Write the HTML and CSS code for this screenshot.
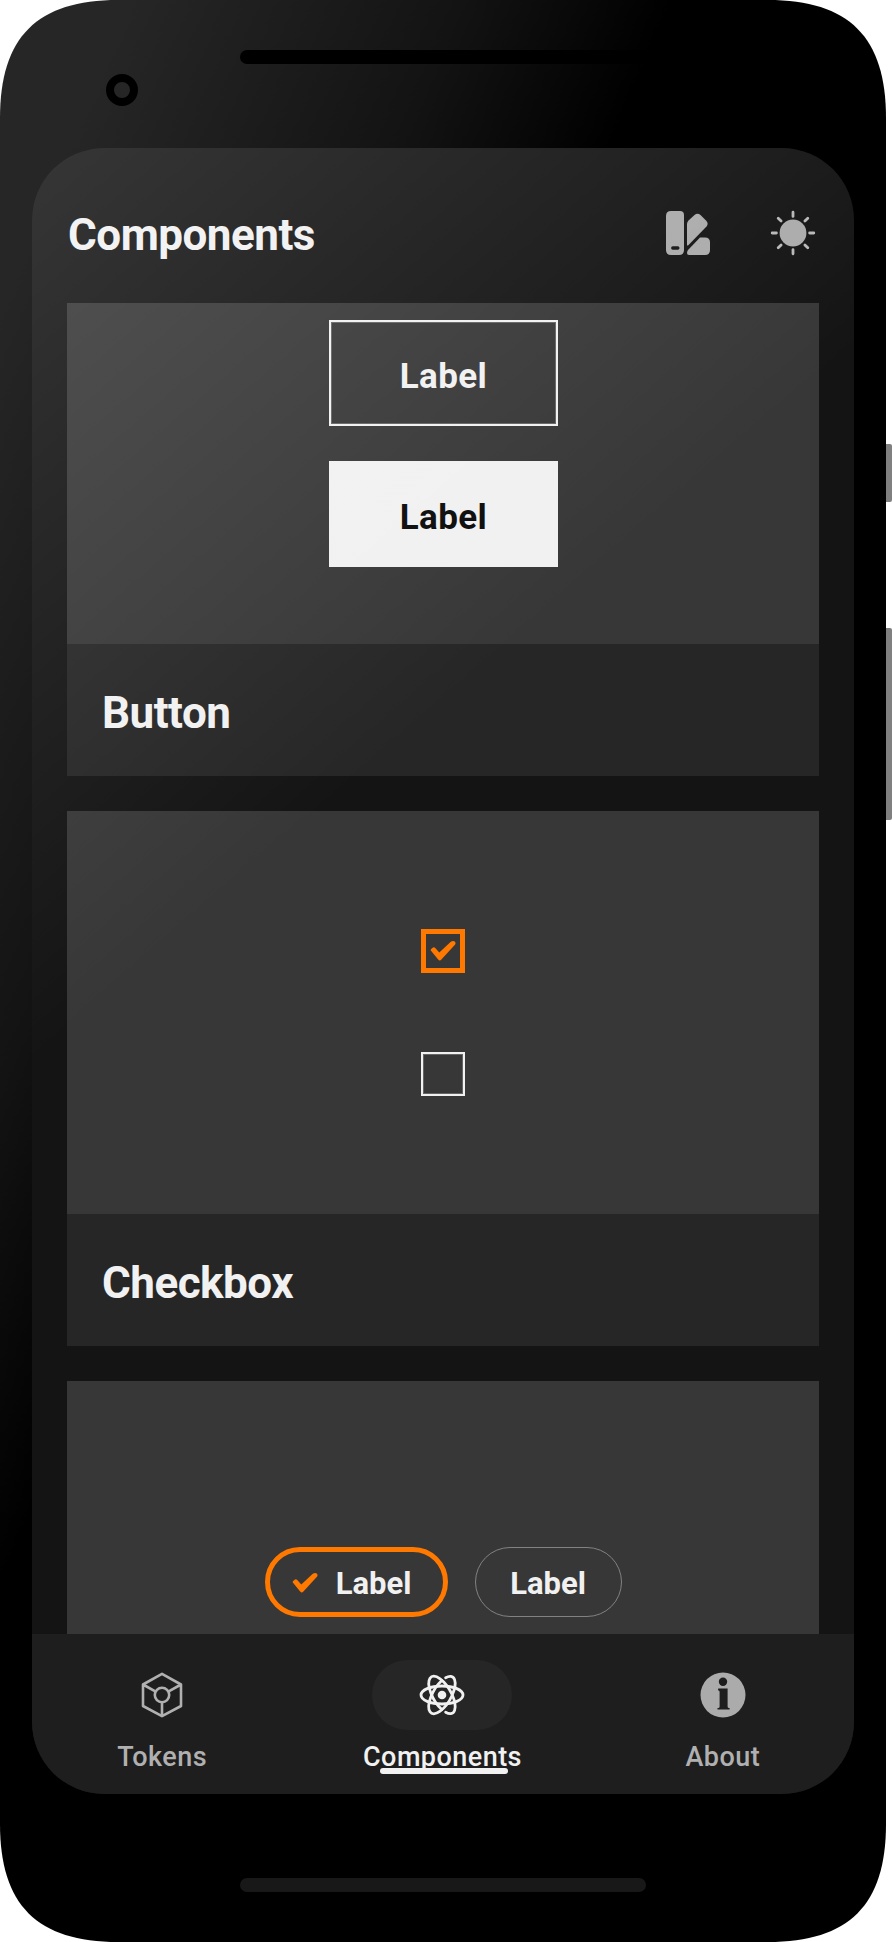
FILE: index.html
```html
<!DOCTYPE html>
<html lang="en">
<head>
<meta charset="utf-8">
<title>Components</title>
<link rel="stylesheet" href="styles.css">
</head>
<body>
<div class="stage">
  <div class="phone">
    <div class="bezel-top"><div class="camera"></div><div class="speaker"></div></div>
    <div class="screen">
      <header class="header">
        <h1 class="title">Components</h1>
        <div class="actions">
          <svg class="icon" viewBox="0 0 46 46" fill="#ababab">
            <path fill-rule="evenodd" d="M6 1h9q4 0 4 4v35q0 5-5 5H6q-5 0-5-5V6q0-5 5-5zM7.800 36.300a1.700 1.700 0 0 0 0 3.400h5a1.700 1.700 0 0 0 0-3.400z"/>
            <path d="M22 35V14q0-2 1.500-3.500l6-5.500q3-2.500 6 0l5.500 5.500q3 3 .500 6L22.800 35.700z"/>
            <path d="M23 40l12-12.500h5q5 0 5 5V40q0 5-5 5H24q-2 0-2-2 0-1.500 1-3z"/>
          </svg>
          <svg class="icon" viewBox="0 0 46 46" fill="#ababab" stroke="#b8b8b8" stroke-width="2.800" stroke-linecap="round">
            <circle cx="23" cy="23" r="13.400" stroke="none"/>
            <path d="M23 2.200v4.200M23 39.600v4.200M2.200 23h4.200M39.600 23h4.200M8.200 8.200l2.900 2.900M34.900 34.900l2.900 2.900M8.200 37.800l2.900-2.900M34.900 11.100l2.900-2.900"/>
          </svg>
        </div>
      </header>
      <main class="list">
        <section class="card card-clipped">
          <div class="demo demo-buttons">
            <div class="button outlined">Label</div>
            <div class="button filled">Label</div>
          </div>
          <h2 class="name">Button</h2>
        </section>
        <section class="card">
          <div class="demo demo-checkboxes">
            <div class="checkbox checked">
              <svg class="check" viewBox="0 0 26 22"><path d="M1 10.800Q.300 9.700 1.200 9L3 7.500q1-.700 2 .200L9.300 12.500 20.500 2q2.800-2 4.500-.200 1.200 1.500-.300 3.200L11.400 19.500q-1.600 1.900-3.200 0z" fill="#ff7900"/></svg>
            </div>
            <div class="checkbox"></div>
          </div>
          <h2 class="name">Checkbox</h2>
        </section>
        <section class="card">
          <div class="demo demo-chips">
            <div class="chip selected">
              <svg class="check" viewBox="0 0 26 22"><path d="M1 10.800Q.300 9.700 1.200 9L3 7.500q1-.700 2 .200L9.300 12.500 20.500 2q2.800-2 4.500-.200 1.200 1.500-.300 3.200L11.400 19.500q-1.600 1.900-3.200 0z" fill="#ff7900"/></svg>
              <span>Label</span>
            </div>
            <div class="chip"><span>Label</span></div>
          </div>
        </section>
      </main>
      <nav class="nav">
        <div class="tab">
          <div class="pill">
            <svg class="icon" viewBox="0 0 46 46" fill="none" stroke="#b0b0b0" stroke-width="2.600" stroke-linejoin="round">
              <path d="M23 1.800l19 10.700v21.500L23 44.200 4 34V12.500zM4 12.500l12.700 7.200M42 12.500l-12.700 7.200M23 30v14"/>
              <circle cx="23" cy="23" r="7.200"/>
            </svg>
          </div>
          <span>Tokens</span>
        </div>
        <div class="tab active">
          <div class="pill">
            <svg class="icon" viewBox="0 0 46 46" fill="none" stroke="#f1f1f1" stroke-width="2.800" stroke-linecap="round">
              <ellipse cx="23" cy="23" rx="21" ry="9"/>
              <path transform="rotate(60 23 23)" d="M35.500 30.390A21 9.200 0 1 1 39.800 28.500"/>
              <path transform="rotate(-60 23 23)" d="M35.500 15.610A21 9.200 0 1 0 39.800 17.500"/>
              <circle cx="23" cy="23" r="4.300" fill="#f1f1f1" stroke="none"/>
            </svg>
          </div>
          <span>Components</span>
        </div>
        <div class="tab">
          <div class="pill">
            <svg class="icon" viewBox="0 0 46 46">
              <circle cx="23" cy="23" r="22.500" fill="#ababab"/>
              <g fill="#1e1e1e"><circle cx="23" cy="9.800" r="4.200"/><path d="M18.200 16.500H27.600V34.500q0 1.500 1.500 1.500h.500v1.600H17.500V36h.700q1.400 0 1.400-1.500V19.800q0-1.500-1.600-1.500z"/></g>
            </svg>
          </div>
          <span>About</span>
        </div>
        <div class="gesture"></div>
      </nav>
      <div class="glare"></div>
    </div>
    <div class="bezel-bottom"><div class="speaker-bottom"></div></div>
  </div>
  <div class="side"><div class="power"></div><div class="volume"></div></div>
</div>
</body>
</html>
```
FILE: styles.css
```css
* { box-sizing: border-box; }
body { margin: 0; background: #fff; font-family: Roboto, "Liberation Sans", sans-serif; color: #f1f1f1; }
.stage { display: flex; width: 892px; height: 1942px; overflow: hidden; }
.phone {
  display: flex; flex-direction: column; width: 886px; height: 1942px;
  background: linear-gradient(113deg, #262626 120px, #131313 425px, #000 620px);
  clip-path: path("M0 118C0 37 37 0 118 0H768C849 0 886 37 886 118V1824C886 1905 849 1942 768 1942H118C37 1942 0 1905 0 1824Z");
}
.bezel-top { display: flex; height: 148px; padding-left: 106px; }
.camera { width: 32px; height: 32px; margin-top: 74px; border: 8px solid #000; border-radius: 50%; background: #262626; }
.speaker { width: 406px; height: 14px; margin: 50px 0 0 102px; border-radius: 7px; background: #000; }
.screen {
  position: relative; display: flex; flex-direction: column; width: 822px; height: 1646px;
  margin-left: 32px; border-radius: 72px; background: #141414; overflow: hidden;
}
.glare {
  position: absolute; inset: 0; pointer-events: none;
  background: linear-gradient(139deg, rgba(255,255,255,.145), rgba(255,255,255,0) 695px);
}
.header { display: flex; flex: none; justify-content: space-between; height: 155px; padding: 62px 38px 0 36px; }
.title { margin: 0; padding-top: 1px; font-size: 44px; line-height: 48px; font-weight: 700; letter-spacing: -.5px; }
.actions { display: flex; gap: 59px; }
.icon { display: block; width: 46px; height: 46px; }
.list { display: flex; flex: 1; flex-direction: column; gap: 35px; min-height: 0; padding: 0 35px; overflow: hidden; }
.card { flex: none; background: #262626; }
.card-clipped { margin-top: -62px; }
.demo { display: flex; height: 403px; align-items: center; justify-content: center; background: #373737; }
.demo-buttons { flex-direction: column; gap: 35px; padding-top: 2px; }
.button { display: flex; width: 229px; height: 106px; padding: 7px 0 0 1px; align-items: center; justify-content: center; font-size: 35px; font-weight: 700; letter-spacing: .4px; }
.outlined { border: 2px solid #f1f1f1; outline: 1px solid rgba(241,241,241,.25); outline-offset: -3px; }
.filled { background: #f1f1f1; color: #0a0a0a; }
.demo-checkboxes { flex-direction: column; gap: 79px; }
.checkbox { display: flex; width: 44px; height: 44px; align-items: center; justify-content: center; border: 2px solid #f1f1f1; outline: 1px solid rgba(241,241,241,.25); outline-offset: -3px; }
.checked { border: 5px solid #ff7900; outline: none; }
.check { display: block; width: 26px; height: 22px; }
.demo-chips { gap: 27px; padding: 0 0 1px; }
.chip { display: flex; width: 147px; height: 70px; padding-top: 2px; align-items: center; justify-content: center; border: 1px solid #828282; border-radius: 35px; font-size: 31px; font-weight: 700; }
.selected { width: 183px; gap: 18px; padding: 2px 9px 0 0; border: 5px solid #ff7900; }
.name { height: 132px; margin: 0; padding: 3px 35px 0; font-size: 44px; line-height: 132px; font-weight: 700; letter-spacing: -.5px; }
.nav { position: relative; display: flex; flex: none; gap: 20px; height: 160px; padding: 26px 1px 0 0; background: #1e1e1e; }
.tab { display: flex; flex: 1; flex-direction: column; align-items: center; gap: 9px; color: #b0b0b0; font-size: 27px; line-height: 36px; font-weight: 500; letter-spacing: .45px; }
.active { color: #f1f1f1; }
.pill { display: flex; width: 140px; height: 70px; align-items: center; justify-content: center; border-radius: 35px; }
.active .pill { background: #262626; }
.gesture { position: absolute; left: 348px; top: 134px; width: 128px; height: 6px; border-radius: 3px; background: #f1f1f1; }
.bezel-bottom { display: flex; height: 148px; padding: 84px 0 0 240px; }
.speaker-bottom { width: 406px; height: 14px; border-radius: 7px; background: #181818; }
.side { display: flex; flex-direction: column; gap: 126px; width: 6px; padding-top: 444px; }
.power, .volume { height: 58px; border-radius: 0 2px 2px 0; background: #808080; }
.volume { height: 192px; }
```
